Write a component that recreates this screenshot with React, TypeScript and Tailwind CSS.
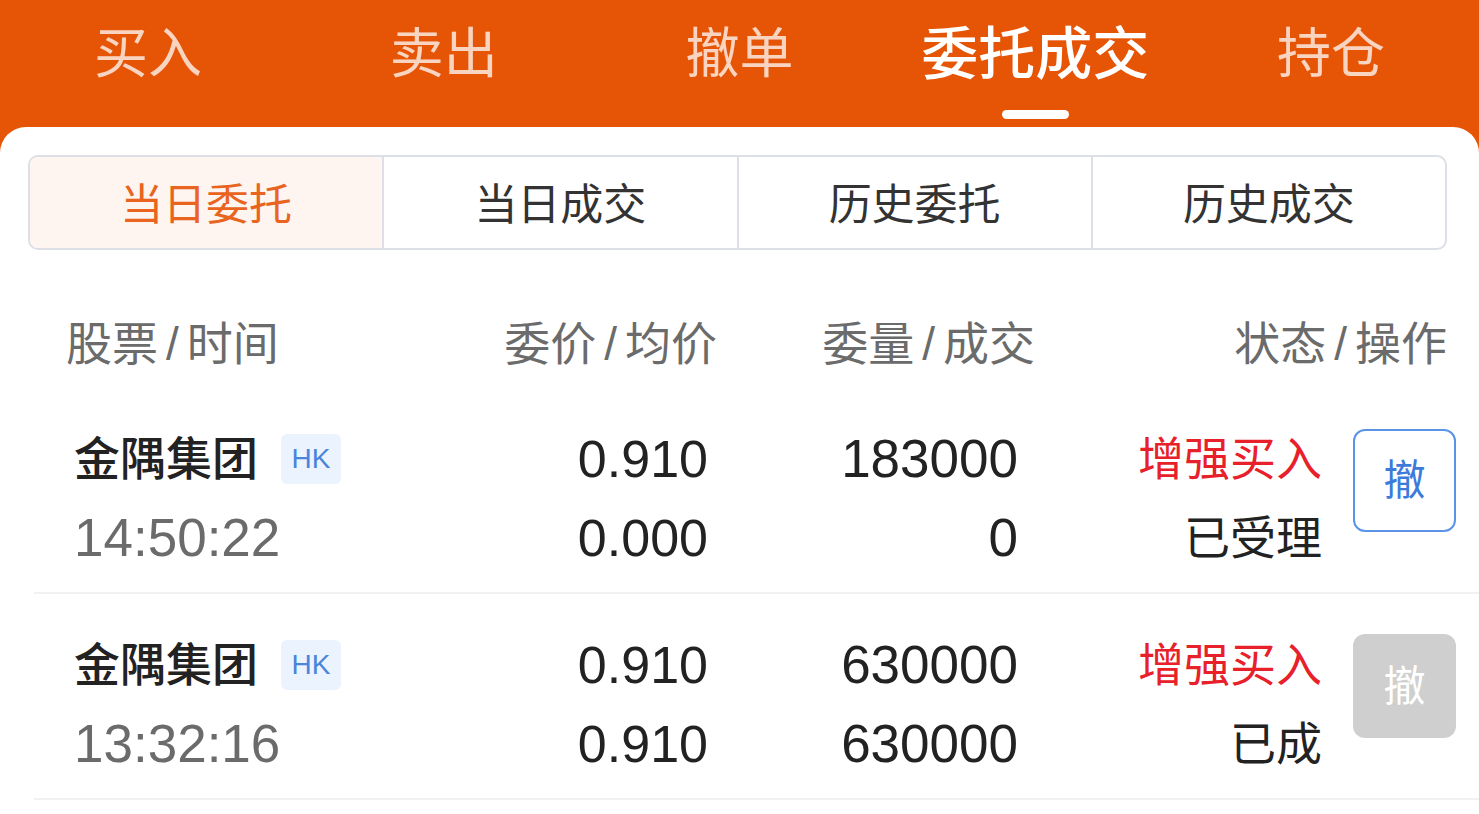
const tabs = ['买入', '卖出', '撤单', '委托成交', '持仓']
const segments = ['当日委托', '当日成交', '历史委托', '历史成交']

type Order = {
  name: string
  time: string
  price: string
  avg: string
  qty: string
  filled: string
  side: string
  status: string
  canCancel: boolean
}

const orders: Order[] = [
  { name: '金隅集团', time: '14:50:22', price: '0.910', avg: '0.000', qty: '183000', filled: '0', side: '增强买入', status: '已受理', canCancel: true },
  { name: '金隅集团', time: '13:32:16', price: '0.910', avg: '0.910', qty: '630000', filled: '630000', side: '增强买入', status: '已成', canCancel: false },
]

function Slash() {
  return <span className="mx-[8px]">/</span>
}

function OrderRow({ o }: { o: Order }) {
  return (
    <div className="flex items-start pl-[40px] pt-[42px] pb-[25px] border-b-2 border-[#f1f1f1]">
      <div className="w-[326px] flex flex-col gap-[21px]">
        <div className="h-[58px] flex items-center gap-[23px]">
          <span className="text-[46px] font-medium text-[#222]">{o.name}</span>
          <span className="w-[60px] h-[50px] rounded-[6px] bg-[#ebf3fe] text-[#4a85da] text-[28px] flex items-center justify-center">HK</span>
        </div>
        <div className="h-[58px] flex items-center text-[53px] font-medium text-[#6b6b6b]">{o.time}</div>
      </div>
      <div className="w-[308px] flex flex-col gap-[21px] text-right text-[52px] text-[#222]">
        <div className="h-[58px] leading-[58px]">{o.price}</div>
        <div className="h-[58px] leading-[58px]">{o.avg}</div>
      </div>
      <div className="w-[310px] flex flex-col gap-[21px] text-right text-[53px] text-[#222]">
        <div className="h-[58px] leading-[58px]">{o.qty}</div>
        <div className="h-[58px] leading-[58px]">{o.filled}</div>
      </div>
      <div className="w-[304px] flex flex-col gap-[21px] text-right text-[46px]">
        <div className="h-[58px] leading-[58px] text-[#e8202a]">{o.side}</div>
        <div className="h-[58px] leading-[58px] text-[#222]">{o.status}</div>
      </div>
      {o.canCancel ? (
        <div className="ml-[31px] -mt-[1px] w-[103px] h-[103px] rounded-[12px] border-2 border-[#5b93e6] text-[#3d7bdb] text-[42px] flex items-center justify-center">撤</div>
      ) : (
        <div className="ml-[31px] -mt-[2px] w-[103px] h-[104px] rounded-[12px] bg-[#cfcfcf] text-white text-[42px] flex items-center justify-center">撤</div>
      )}
    </div>
  )
}

export default function App() {
  return (
    <div
      className="w-[1479px] h-[814px] bg-[#e65506] overflow-hidden flex flex-col"
      style={{ fontFamily: '"Liberation Sans", "Noto Sans CJK SC", sans-serif' }}
    >
      <div className="grid grid-cols-5 h-[127px] shrink-0">
        {tabs.map((t, i) => (
          <div key={t} className="flex flex-col items-center">
            <div className={i === 3 ? 'mt-[24px] h-[60px] leading-[60px] text-[57px] font-medium text-white' : 'mt-[24px] h-[60px] leading-[60px] text-[54px] text-white/75'}>{t}</div>
            {i === 3 && <div className="mt-[26px] w-[67px] h-[9px] rounded-full bg-white" />}
          </div>
        ))}
      </div>

      <div className="flex-1 bg-white rounded-t-[26px]">
        <div className="mt-[28px] ml-[28px] w-[1419px] h-[95px] flex border-2 border-[#dcdfe5] rounded-[10px] overflow-hidden">
          {segments.map((s, i) => (
            <div
              key={s}
              className={
                i === 0
                  ? 'flex-1 flex items-center justify-center pt-[5px] bg-[#fef4f0] text-[#e8641f] text-[43px]'
                  : 'flex-1 flex items-center justify-center pt-[5px] border-l-2 border-[#dcdfe5] text-[#333] text-[43px]'
              }
            >
              {s}
            </div>
          ))}
        </div>

        <div className="ml-[34px]">
          <div className="flex pl-[32px] pt-[64px] pb-[14px] text-[46px] text-[#6b6b6b] leading-[60px]">
            <div className="w-[334px]">股票<Slash />时间</div>
            <div className="w-[317px] text-right">委价<Slash />均价</div>
            <div className="w-[318px] text-right">委量<Slash />成交</div>
            <div className="w-[412px] text-right">状态<Slash />操作</div>
          </div>
          {orders.map((o) => (
            <OrderRow key={o.time} o={o} />
          ))}
        </div>
      </div>
    </div>
  )
}
